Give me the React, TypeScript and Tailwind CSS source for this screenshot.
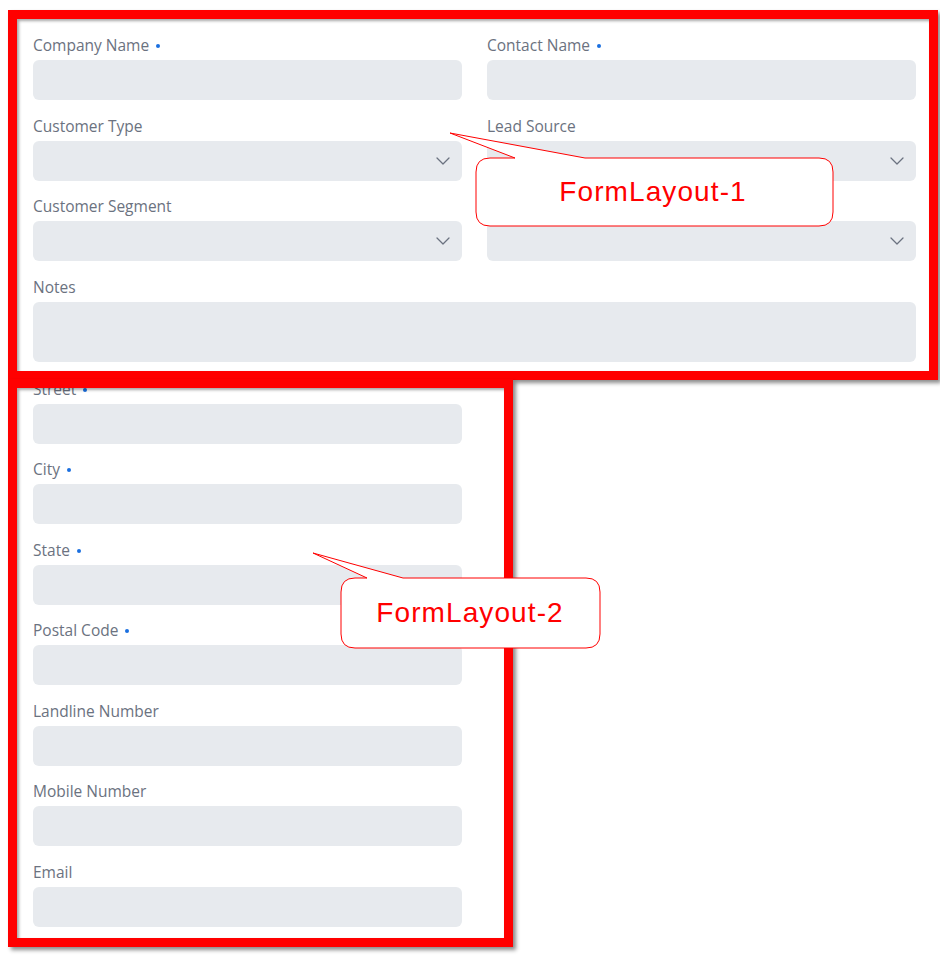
import { ChevronDown } from 'lucide-react'

const labelFont = { fontFamily: '"Open Sans", "Noto Sans", sans-serif' }

function Label({ text, required }: { text: string; required?: boolean }) {
  return (
    <label className="flex h-5 items-start text-[15.5px] leading-[18px] text-[#6b7280]" style={labelFont}>
      {text}
      {required && <span className="ml-[7px] mt-[8px] inline-block h-[4px] w-[4px] rounded-full bg-[#1a6fe0]" />}
    </label>
  )
}

function Field({ label, required, select, tall }: { label: string; required?: boolean; select?: boolean; tall?: boolean }) {
  return (
    <div className="flex flex-col gap-1">
      <Label text={label} required={required} />
      <div className={`relative rounded-md bg-[#e7eaee] ${tall ? 'h-[60px]' : 'h-10'}`}>
        {select && (
          <ChevronDown className="absolute right-[7px] top-[8px] h-6 w-6 text-[#6b7280]" strokeWidth={1.25} />
        )}
      </div>
    </div>
  )
}

export default function App() {
  return (
    <div className="relative h-[957px] w-[940px] overflow-hidden bg-white">
      {/* the form itself */}
      <form className="pl-[33px] pt-[36px]">
        <div className="grid w-[883px] grid-cols-2 gap-x-[25px] gap-y-[16.5px]">
          <Field label="Company Name" required />
          <Field label="Contact Name" required />
          <Field label="Customer Type" select />
          <Field label="Lead Source" select />
          <Field label="Customer Segment" select />
          <Field label="Customer Status" select />
          <div className="col-span-2">
            <Field label="Notes" tall />
          </div>
        </div>

        <div className="mt-[18px] flex w-[429px] flex-col gap-y-[16.5px]">
          <Field label="Street" required />
          <Field label="City" required />
          <Field label="State" required />
          <Field label="Postal Code" required />
          <Field label="Landline Number" />
          <Field label="Mobile Number" />
          <Field label="Email" />
        </div>
      </form>

      {/* annotation frames */}
      <div className="absolute left-[8px] top-[10px] h-[370px] w-[930px] border-[9px] border-[#ff0000] shadow-[3px_3px_4px_rgba(0,0,0,0.45),inset_2px_2px_3px_rgba(0,0,0,0.35)]" />
      <div className="absolute left-[8px] top-[379px] h-[568px] w-[505px] border-[9px] border-[#ff0000] shadow-[3px_3px_4px_rgba(0,0,0,0.45),inset_2px_2px_3px_rgba(0,0,0,0.35)]" />

      {/* callouts */}
      <svg className="pointer-events-none absolute left-0 top-0" width="940" height="957" viewBox="0 0 940 957">
        <path
          d="M490 158 L515 158 L450 133 L585 158 L819 158 Q833 158 833 172 L833 212 Q833 226 819 226 L490 226 Q476 226 476 212 L476 172 Q476 158 490 158 Z"
          fill="#ffffff"
          stroke="#ff0000"
          strokeWidth="1"
        />
        <text
          x="653"
          y="201"
          textAnchor="middle"
          fill="#ff0000"
          fontSize="28"
          letterSpacing="1.1"
          fontFamily='"Liberation Sans", Arial, sans-serif'
        >
          FormLayout-1
        </text>
        <path
          d="M355 578 L367 578 L313 553 L403 578 L586 578 Q600 578 600 592 L600 634 Q600 648 586 648 L355 648 Q341 648 341 634 L341 592 Q341 578 355 578 Z"
          fill="#ffffff"
          stroke="#ff0000"
          strokeWidth="1"
        />
        <text
          x="470"
          y="622"
          textAnchor="middle"
          fill="#ff0000"
          fontSize="28"
          letterSpacing="1.1"
          fontFamily='"Liberation Sans", Arial, sans-serif'
        >
          FormLayout-2
        </text>
      </svg>
    </div>
  )
}
